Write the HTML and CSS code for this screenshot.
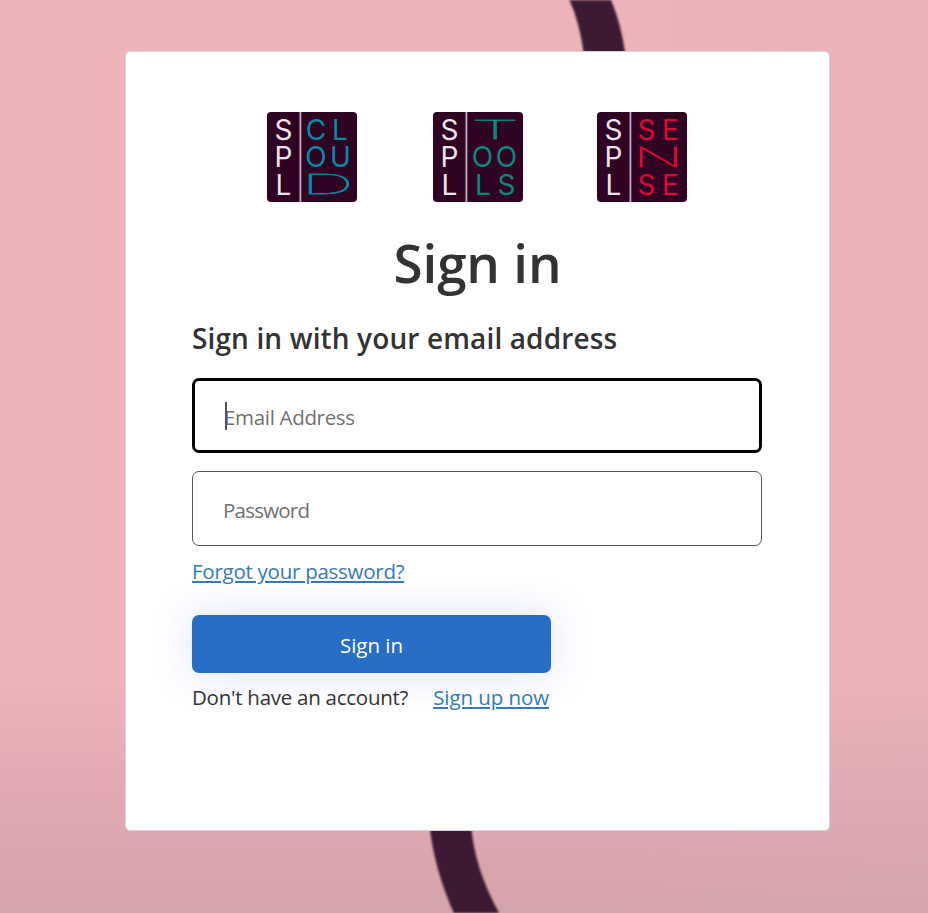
FILE: index.html
```html
<!DOCTYPE html>
<html lang="en">
<head>
<meta charset="utf-8">
<title>Sign in</title>
<link rel="stylesheet" href="styles.css">
</head>
<body>
<svg class="backdrop" viewBox="0 0 928 913" aria-hidden="true">
  <path d="M567 -5 Q579 18 584 55 L625.500 55 Q621 22 609 -5Z"/>
  <path d="M429.500 825 Q434 870 456 918 L502 918 Q475 872 471 825Z"/>
</svg>
<main class="card">
  <div class="logos">
    <svg class="logo cloud" viewBox="0 0 90 90">
      <rect class="tile" width="90" height="90" rx="4"/>
      <rect class="divider" x="32.500" width="1.800" height="90"/>
      <g class="spl"><text x="16.500" y="27.500">S</text><text x="16.500" y="55">P</text><text x="16.500" y="82.500">L</text></g>
      <g class="name"><text x="49" y="27.500">C</text><text x="73" y="27.500">L</text><text x="49" y="55">O</text><text x="73.500" y="55">U</text>
      <text class="wide" transform="translate(60.500 82) scale(2.650 .95)">D</text></g>
    </svg>
    <svg class="logo tools" viewBox="0 0 90 90">
      <rect class="tile" width="90" height="90" rx="4"/>
      <rect class="divider" x="32.500" width="1.800" height="90"/>
      <g class="spl"><text x="16.500" y="27.500">S</text><text x="16.500" y="55">P</text><text x="16.500" y="82.500">L</text></g>
      <g class="name"><text class="wide" transform="translate(62 27) scale(2.850 .93)">T</text>
      <text x="49.500" y="55">O</text><text x="73.500" y="55">O</text><text x="50" y="82.500">L</text><text x="73.500" y="82.500">S</text></g>
    </svg>
    <svg class="logo sense" viewBox="0 0 90 90">
      <rect class="tile" width="90" height="90" rx="4"/>
      <rect class="divider" x="32.500" width="1.800" height="90"/>
      <g class="spl"><text x="16.500" y="27.500">S</text><text x="16.500" y="55">P</text><text x="16.500" y="82.500">L</text></g>
      <g class="name"><text x="49.500" y="27.500">S</text><text x="73.500" y="27.500">E</text>
      <text class="wide" transform="translate(61.500 54.500) scale(2.350 .96)">N</text>
      <text x="49.500" y="82.500">S</text><text x="73.500" y="82.500">E</text></g>
    </svg>
  </div>
  <h1>Sign in</h1>
  <h2>Sign in with your email address</h2>
  <form>
    <div class="field focused"><i class="caret"></i><span class="hint-email">Email Address</span></div>
    <div class="field"><span class="hint-password">Password</span></div>
    <a class="forgot" href="#">Forgot your password?</a>
    <button type="button">Sign in</button>
    <p class="signup"><span>Don't have an account?</span><a href="#">Sign up now</a></p>
  </form>
</main>
</body>
</html>
```

FILE: styles.css
```css
* { box-sizing: border-box; }
body {
  margin: 0;
  height: 913px;
  padding: 51px 98px 0 125px;
  overflow: hidden;
  font-family: "Open Sans", "Noto Sans", sans-serif;
  font-size: 20.5px;
  letter-spacing: -.26px;
  color: #333;
  background:
    linear-gradient(90deg, transparent 60%, rgba(215, 175, 180, .15)),
    linear-gradient(#edb4ba 0, #edb4ba 680px, #e4acb4 760px, #dca7af 840px, #d5a3aa 913px);
}
.backdrop { position: absolute; inset: 0; z-index: -1; width: 928px; height: 913px; fill: #3d1a33; filter: blur(.8px); }
.card {
  width: 705px;
  height: 780px;
  padding: 60px 66px 0;
  background: #fff;
  border: 1px solid #d5d5d5;
  border-radius: 5px;
}
.logos { display: flex; padding-left: 75px; height: 90px; letter-spacing: 0; }
.logo { width: 90px; height: 90px; }
.tools { margin-left: 76px; }
.sense { margin-left: 74px; }
.tile { fill: #300323; }
.divider { fill: #c3b0bf; }
.logo text { font-family: Inter, sans-serif; font-size: 28px; font-weight: 400; text-anchor: middle; }
.spl { fill: #eee4ec; }
.name { fill: currentColor; }
.cloud { color: #0789a6; }
.tools { color: #0a877f; }
.sense { color: #dc0734; }
/* Stretched letters: a hairline weight keeps the widened stems from getting heavy. */
.logo .wide { font-weight: 100; stroke: currentColor; stroke-width: .45px; filter: drop-shadow(0 .8px 0 currentColor); }
h1 { margin: 23px 0 0; font-size: 53px; line-height: 76px; font-weight: 600; text-align: center; letter-spacing: -.2px; }
h2 { margin: 17px 0 0; font-size: 28px; line-height: 40px; font-weight: 600; white-space: nowrap; letter-spacing: .13px; }
form { margin-top: 20px; }
.field {
  position: relative;
  display: flex;
  align-items: center;
  width: 570px;
  height: 75px;
  padding: 2px 0 0 30px;
  border: 1px solid #555;
  border-radius: 7px;
  color: #707070;
  line-height: 28px;
}
.field + .field { margin-top: 18px; }
.focused { border: 3px solid #000; padding: 2px 0 0 29px; }
.hint-email { letter-spacing: -.32px; }
.hint-password { letter-spacing: -.78px; }
.caret { position: absolute; left: 30px; top: 21px; width: 2px; height: 28px; background: #555; }
a { color: #337ab7; text-decoration: underline; text-decoration-thickness: 2px; text-underline-offset: 2px; }
.forgot { display: block; width: max-content; margin-top: 11px; line-height: 28px; }
button {
  display: block;
  width: 359px;
  height: 58px;
  margin-top: 30px;
  padding: 1px 0 0;
  border: 0;
  border-radius: 7px;
  background: #286ec6;
  color: #fff;
  font: 500 20.5px/28px "Open Sans", sans-serif;
  box-shadow: 0 0 40px rgba(65, 88, 220, .18);
}
.signup { display: flex; width: 357px; justify-content: space-between; margin: 10px 0 0; line-height: 28px; white-space: nowrap; }
.signup a { letter-spacing: -.08px; }
```
